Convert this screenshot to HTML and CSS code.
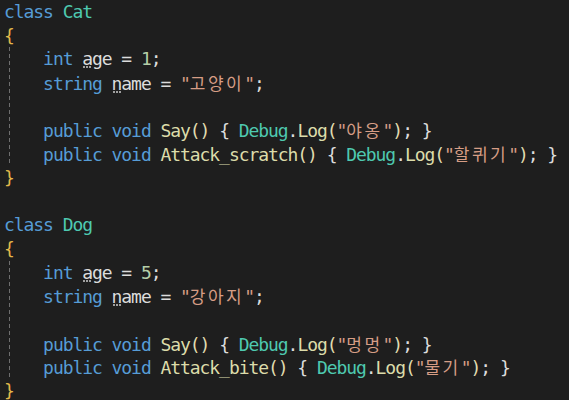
FILE: index.html
```html
<!DOCTYPE html>
<html lang="ko">
<head>
<meta charset="utf-8">
<link rel="stylesheet" href="styles.css">
</head>
<body>
<div class="code">
  <div class="ln"><span class="kw">class</span> <span class="ty">Cat</span></div>
  <div class="ln"><span class="br">{</span></div>
  <div class="block">
    <div class="ln">    <span class="kw">int</span> <span class="hint">a</span>ge = <span class="num">1</span>;</div>
    <div class="ln">    <span class="kw">string</span> <span class="hint">n</span>ame = <span class="str">"<span class="ko">고양이</span>"</span>;</div>
    <div class="ln"> </div>
    <div class="ln">    <span class="kw">public</span> <span class="kw">void</span> <span class="fn">Say</span><span class="pa">()</span> { <span class="ty">Debug</span>.<span class="fn">Log</span><span class="pa">(</span><span class="str">"<span class="ko">야옹</span>"</span><span class="pa">)</span>; }</div>
    <div class="ln">    <span class="kw">public</span> <span class="kw">void</span> <span class="fn">Attack_scratch</span><span class="pa">()</span> { <span class="ty">Debug</span>.<span class="fn">Log</span><span class="pa">(</span><span class="str">"<span class="ko">할퀴기</span>"</span><span class="pa">)</span>; }</div>
  </div>
  <div class="ln"><span class="br">}</span></div>
  <div class="ln"> </div>
  <div class="ln"><span class="kw">class</span> <span class="ty">Dog</span></div>
  <div class="ln"><span class="br">{</span></div>
  <div class="block">
    <div class="ln">    <span class="kw">int</span> <span class="hint">a</span>ge = <span class="num">5</span>;</div>
    <div class="ln">    <span class="kw">string</span> <span class="hint">n</span>ame = <span class="str">"<span class="ko">강아지</span>"</span>;</div>
    <div class="ln"> </div>
    <div class="ln">    <span class="kw">public</span> <span class="kw">void</span> <span class="fn">Say</span><span class="pa">()</span> { <span class="ty">Debug</span>.<span class="fn">Log</span><span class="pa">(</span><span class="str">"<span class="ko">멍멍</span>"</span><span class="pa">)</span>; }</div>
    <div class="ln">    <span class="kw">public</span> <span class="kw">void</span> <span class="fn">Attack_bite</span><span class="pa">()</span> { <span class="ty">Debug</span>.<span class="fn">Log</span><span class="pa">(</span><span class="str">"<span class="ko">물기</span>"</span><span class="pa">)</span>; }</div>
  </div>
  <div class="ln"><span class="br">}</span></div>
</div>
</body>
</html>
```

FILE: styles.css
```css
html, body {
  margin: 0;
  padding: 0;
  background: #1e1e1e;
  overflow: hidden;
}

.code {
  padding-left: 4px;
  font-family: "DejaVu Sans Mono", monospace;
  font-size: 18px;
  letter-spacing: -1.06px;
  color: #dcdcdc;
}

.ln {
  height: 23.7px;
  line-height: 23.7px;
  white-space: pre;
}

.block {
  background-image: repeating-linear-gradient(to bottom, #6e6e6e 0 4px, transparent 4px 7px);
  background-size: 1px 100%;
  background-position: 5px 0;
  background-repeat: no-repeat;
}

.kw { color: #569cd6; }
.ty { color: #4ec9b0; }
.fn { color: #dcdcaa; }
.num { color: #b5cea8; }
.str { color: #d69d85; }
.br { color: #e2b84a; }
.pa { color: #e0dcb0; }

.ko {
  font-family: "Noto Sans CJK KR", sans-serif;
  font-size: 17px;
  letter-spacing: 2.5px;
}

.hint {
  position: relative;
}

.hint::after {
  content: "";
  position: absolute;
  left: 1px;
  bottom: 1px;
  width: 8px;
  height: 2px;
  background-image: repeating-linear-gradient(to right, #a0a0a0 0 2px, transparent 2px 3px);
}
```
